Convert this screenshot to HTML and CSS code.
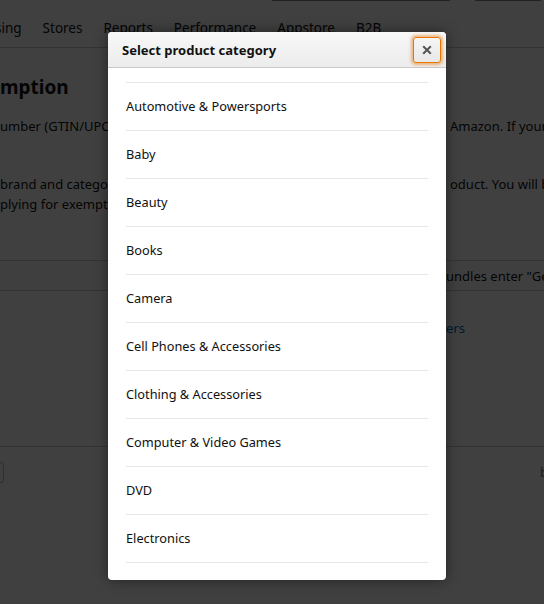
FILE: index.html
```html
<!DOCTYPE html>
<html lang="en">
<head>
<meta charset="utf-8">
<title>Select product category</title>
<link rel="stylesheet" href="styles.css">
</head>
<body>
<div class="page">
  <div class="topbar">
    <div class="topbox topbox-a"></div>
    <div class="topbox topbox-b"></div>
  </div>
  <nav class="nav">
    <span class="tab tab-first">sing</span>
    <span class="tab">Stores</span>
    <span class="tab">Reports</span>
    <span class="tab">Performance</span>
    <span class="tab">Appstore</span>
    <span class="tab">B2B</span>
  </nav>
  <div class="content">
    <h1 class="title">mption</h1>
    <div class="row2">
      <p class="txt">umber (GTIN/UPC</p>
      <p class="txt">Amazon. If your</p>
    </div>
    <div class="row2 row-gap">
      <p class="txt">brand and categor<br>plying for exemptio</p>
      <p class="txt">oduct. You will b</p>
    </div>
  </div>
  <div class="band">
    <span class="txt">undles enter "Ge</span>
  </div>
  <div class="linkrow">
    <a class="lnk">ers</a>
  </div>
  <div class="foot">
    <div class="pill"></div>
    <span class="txt faint">b</span>
  </div>
</div>
<div class="overlay"></div>
<div class="modal">
  <div class="modal-head">
    <span class="modal-title">Select product category</span>
    <button class="close" aria-label="Close">
      <svg width="10" height="10" viewBox="0 0 10 10"><path d="M1.2 1.2 L8.8 8.8 M8.8 1.2 L1.2 8.8" stroke="#555" stroke-width="2" stroke-linecap="butt"/></svg>
    </button>
  </div>
  <div class="modal-body">
    <ul class="cats">
      <li>Automotive &amp; Powersports</li>
      <li>Baby</li>
      <li>Beauty</li>
      <li>Books</li>
      <li>Camera</li>
      <li>Cell Phones &amp; Accessories</li>
      <li>Clothing &amp; Accessories</li>
      <li>Computer &amp; Video Games</li>
      <li>DVD</li>
      <li>Electronics</li>
    </ul>
  </div>
</div>
</body>
</html>
```
FILE: styles.css
```css
* { box-sizing: border-box; }
html, body { margin: 0; padding: 0; }
body {
  width: 544px;
  height: 604px;
  overflow: hidden;
  background: #fff;
  font-family: "Noto Sans", "Open Sans", sans-serif;
  color: #111;
  position: relative;
}
.page { width: 544px; }
.topbar { height: 1px; display: flex; }
.topbox { height: 1px; background: #888; }
.topbox-a { margin-left: 272px; width: 178px; }
.topbox-b { margin-left: 25px; width: 66px; }
.nav {
  display: flex;
  height: 47px;
  padding-top: 17px;
  border-bottom: 1px solid #ccc;
  font-size: 13.5px;
  line-height: 20px;
  white-space: nowrap;
}
.tab { margin-right: 21px; }
.tab-first { margin-left: -5px; }
.content { padding-top: 26px; }
.title {
  margin: 0;
  font-size: 19px;
  font-weight: 700;
  line-height: 26px;
}
.row2 {
  display: flex;
  justify-content: space-between;
  margin-top: 16px;
}
.row-gap { margin-top: 38px; }
.txt {
  margin: 0;
  font-size: 13px;
  line-height: 20px;
}
.row2 .txt:last-child { width: 94px; overflow: hidden; white-space: nowrap; }
.band {
  margin-top: 46px;
  height: 31px;
  border-top: 1px solid #ccc;
  border-bottom: 1px solid #ccc;
  background: #fcfcfc;
  display: flex;
  justify-content: flex-end;
  align-items: center;
}
.band .txt { width: 98px; overflow: hidden; white-space: nowrap; }
.linkrow {
  display: flex;
  justify-content: flex-end;
  margin-top: 27px;
  height: 20px;
  font-size: 13px;
  line-height: 20px;
}
.lnk { color: #0066c0; width: 98px; }
.foot {
  margin-top: 108px;
  border-top: 1px solid #ccc;
  padding-top: 15px;
  display: flex;
  justify-content: space-between;
}
.pill {
  width: 4px;
  height: 21px;
  border: 1px solid #bbb;
  border-left: none;
  border-radius: 0 4px 4px 0;
}
.faint { color: #777; margin-right: -4px; }
.overlay {
  position: absolute;
  inset: 0;
  background: rgba(0, 0, 0, 0.75);
}
.modal {
  position: absolute;
  left: 108px;
  top: 32px;
  width: 338px;
  height: 548px;
  background: #fff;
  border-radius: 4px;
  box-shadow: 0 0 14px rgba(0, 0, 0, 0.45);
  overflow: hidden;
  display: flex;
  flex-direction: column;
}
.modal-head {
  height: 36px;
  flex: none;
  background: linear-gradient(#f8f8f8, #ececec);
  border-bottom: 1px solid #c9c9c9;
  display: flex;
  align-items: center;
  justify-content: space-between;
  padding: 0 5px 0 14px;
}
.modal-title {
  font-size: 13px;
  font-weight: 700;
  color: #111;
}
.close {
  width: 28px;
  height: 26px;
  padding: 0;
  margin-top: 1px;
  display: flex;
  align-items: center;
  justify-content: center;
  background: linear-gradient(#f5f5f5, #e8e8e8);
  border: 1px solid #e77600;
  border-radius: 3px;
  box-shadow: 0 0 3px 2px rgba(228, 121, 17, 0.5);
}
.modal-body {
  flex: 1;
  overflow: hidden;
  padding: 14px 18px 0;
}
.cats {
  list-style: none;
  margin: 0;
  padding: 0;
  border-top: 1px solid #e7e7e7;
}
.cats li {
  height: 48px;
  line-height: 47px;
  border-bottom: 1px solid #e7e7e7;
  font-size: 12.75px;
  color: #111;
}
```
